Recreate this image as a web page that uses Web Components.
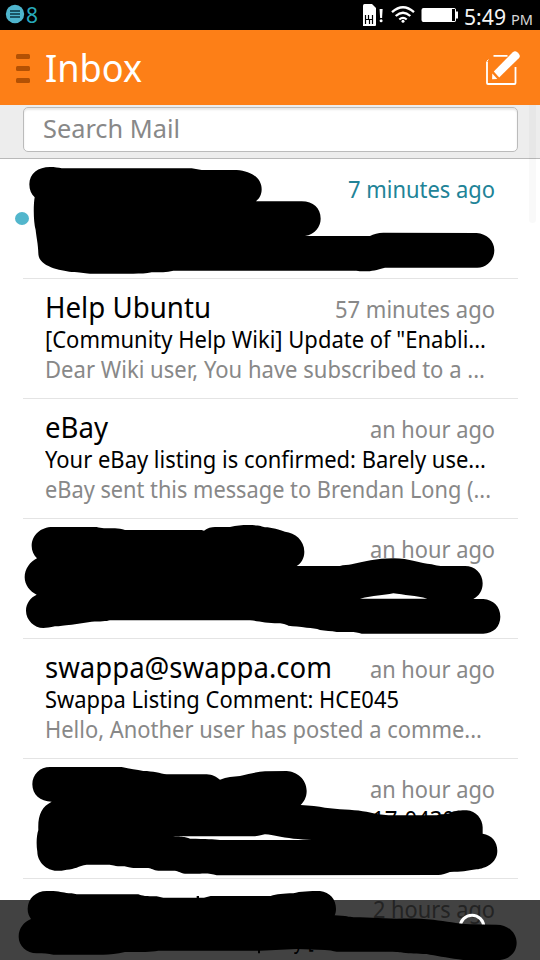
<!DOCTYPE html>
<html lang="en">
<head>
<meta charset="utf-8">
<title>Inbox</title>
<style>
body{margin:0;width:540px;height:960px;overflow:hidden;background:#fff;font-family:"Noto Sans","Open Sans",sans-serif}
</style>
</head>
<body>
<mail-app></mail-app>
<script>
const define = (name, html, setup) => customElements.define(name, class extends HTMLElement {
  constructor() {
    super();
    this.attachShadow({mode: 'open'}).innerHTML = html;
  }
  connectedCallback() { if (setup) setup(this, this.shadowRoot); }
});

// A single line of text condensed to the width given in its w attribute.
define('fit-text', `<style>:host{display:block;white-space:nowrap;flex:none}span{display:inline-block;transform-origin:0 50%}</style><span></span>`,
(el, root) => {
  const s = root.querySelector('span'), w = +el.getAttribute('w');
  s.textContent = el.getAttribute('text');
  el.style.width = w + 'px';
  s.style.transform = `scaleX(${w / s.getBoundingClientRect().width})`;
});

define('status-bar', `<style>
:host{display:flex;height:30px;background:#000;color:#fff;align-items:flex-start;box-sizing:border-box;padding:0 7px 0 5px}
svg{display:block;flex:none}
.n{font-size:22px;line-height:29px;color:#27a9bb;margin-left:1px}
.gap{flex:1}
.t{font-size:22px;line-height:33px;margin-left:6px;color:#f4f4f4}
.p{font-size:15px;line-height:39px;margin-left:5px;color:#d8d8d8}
</style>
<svg width="20" height="30"><circle cx="10" cy="14" r="9.2" fill="#4fb5cd"/><path d="M5 11h10M5 14h10M5 17h10" stroke="#0b3440" stroke-width="1.5"/></svg>
<fit-text class="n" w="12" text="8"></fit-text><div class="gap"></div>
<svg width="96" height="30" viewBox="362 0 96 30" fill="#fff">
<path d="M363 5.500a1.500 1.500 0 0 1 1.500-1.500H372l4 4V25a1 1 0 0 1-1 1H363z"/>
<path d="M365.500 15v9M365.500 19.500h3V15M372.500 15v9M369.500 24v-4.500h3" fill="none" stroke="#000" stroke-width="1.200"/>
<path d="M379.600 9h3l-.5 9h-2z"/><circle cx="381.100" cy="20.800" r="1.500"/>
<g fill="none" stroke="#fff" stroke-width="2.300"><path d="M392 12.200q11-10 22 0M395.700 16q7.300-6.600 14.600 0M399.300 19.500q3.700-3.200 7.400 0"/></g><circle cx="403" cy="21.300" r="1.500"/>
<path d="M423.500 8H454a2 2 0 0 1 2 1.500v2h2v7h-2v2a2 2 0 0 1-2 1.500H423.500a2 2 0 0 1-2-2V10a2 2 0 0 1 2-2z"/><path d="M452 9h3v12h-3z" fill="#000"/>
</svg>
<fit-text class="t" w="42" text="5:49"></fit-text><fit-text class="p" w="22" text="PM"></fit-text>`);

define('app-header', `<style>
:host{display:flex;height:75px;background:#fd7f17;color:#fff;align-items:center;box-sizing:border-box;padding:0 19px 0 16px}
.m{display:grid;gap:7px;width:14px;margin-top:2px}.m i{height:5px;border-radius:1.500px;background:#b35104}
.h{font-size:38px;line-height:75px;margin:-1px auto 0 15px}
svg{display:block}
</style>
<div class="m"><i></i><i></i><i></i></div><fit-text class="h" w="97" text="Inbox"></fit-text>
<svg width="36" height="36" viewBox="485 49 36 36"><path d="M493.500 54.800h14M487 60.500V82q0 1 1 1h26.500q1 0 1-1V66" fill="none" stroke="#fff" stroke-width="1.800"/><path d="M487 60l1.500-1.300" stroke="#fff"/><path d="M493.800 70.500L512.800 51.200a3.300 3.300 0 0 1 4.500 0l1.500 1.500a3.300 3.300 0 0 1 0 4.500L499.200 76.500z" fill="#fff"/><path d="M492.300 72.500l5 5.500-5.200.3z" fill="#fff"/></svg>`);

define('search-field', `<style>
:host{display:block;height:54px;background:#ededed;border-bottom:1px solid #b9b9b9;box-sizing:border-box;padding:2px 22px 0 23px}
div{height:45px;box-sizing:border-box;border:1px solid #bbb;border-radius:5px;background:#fff;box-shadow:inset 0 2px 2px #e8e8e8;padding-left:19px;font-size:25px;line-height:41px;color:#888}
</style><div><fit-text w="137" text="Search Mail"></fit-text></div>`);

define('mail-row', `<style>
:host{display:block;height:120px;box-sizing:border-box;margin:0 22px 0 23px;padding:11px 22px 0 22px;border-bottom:1px solid #e4e4e4;position:relative}
.top{display:flex;justify-content:space-between;align-items:baseline;height:34px;line-height:34px;font-size:29px}
.top::before{content:"\\200b";width:0}
.d{font-size:23px;color:#888;margin-left:auto;margin-right:1px}
:host([unread]) .d{color:#218397}
.s,.p{font-size:23px;line-height:30px;height:30px}.p{color:#888}
.dot{position:absolute;left:-8px;top:53px;width:14px;height:13px;border-radius:50%;background:#52b6cc}
</style><div class="top"></div><div class="s"></div><div class="p"></div>`,
(el, root) => {
  const put = (sel, cls, key) => {
    if (!el.hasAttribute(key)) return;
    const [w, text, indent] = el.getAttribute(key).split('|');
    const f = document.createElement('fit-text');
    f.className = cls;
    f.setAttribute('w', w);
    f.setAttribute('text', text);
    if (indent) f.style.marginLeft = indent + 'px';
    root.querySelector(sel).append(f);
  };
  put('.top', 'n', 'name'); put('.top', 'd', 'date'); put('.s', '', 'subject'); put('.p', '', 'preview');
  if (el.hasAttribute('unread')) {
    const dot = document.createElement('div');
    dot.className = 'dot';
    root.append(dot);
  }
});

define('bottom-bar', `<style>:host{display:block;background:rgba(0,0,0,.74)}svg{display:block}</style>
<svg width="540" height="60" viewBox="0 900 540 60"><circle cx="472" cy="927" r="11.800" fill="none" stroke="#fff" stroke-width="3"/></svg>`);

// Hand-drawn marker strokes; each group is drawn on a grid of one third of a pixel.
define('marker-strokes', `<style>:host{display:block;pointer-events:none}svg{display:block}</style>
<svg width="540" height="960" fill="#000" fill-rule="evenodd">
<path transform="translate(0 155) scale(.33333)" d="M88 88C88 55 115 36 150 36C165 36 175 38 185 40L575 40L605 45L710 45C755 48 785 70 785 103C785 120 778 130 768 139L905 139C940 139 962 160 962 191C962 215 945 238 915 243L1110 243C1120 237 1135 233 1150 233L1430 234C1460 236 1483 257 1483 286C1483 315 1460 338 1432 338L1155 338C1130 345 1115 349 1095 349C1080 349 1070 347 1050 347L520 347C500 352 480 352 455 352C440 356 420 356 400 356L270 356C250 355 240 351 215 351C180 346 115 335 115 295C115 270 108 240 107 225C100 200 100 150 104 127C94 118 88 105 88 88Z"/>
<path transform="translate(0 515) scale(.33333)" d="M95 93C95 60 122 36 158 36L290 36C305 40 315 40 345 40C355 40 365 43 375 45L605 45L612 47C622 38 635 37 645 36L690 36C710 31 725 30 745 30C775 30 785 33 795 37C815 37 840 45 855 50C885 54 913 75 913 110C913 130 903 145 890 153L1020 153C1030 150 1045 151 1055 148C1090 140 1130 130 1180 130C1230 130 1260 145 1295 148C1308 151 1315 153 1322 153L1395 153C1425 153 1448 175 1448 205C1448 228 1437 243 1420 252L1450 252C1480 254 1501 275 1501 305C1501 335 1480 355 1450 356L1085 356C1075 353 1065 351 1050 351L1010 351C995 347 975 348 960 345C950 340 935 339 920 338C900 334 880 334 865 332C855 328 850 325 835 325C800 325 775 318 750 316L330 316C320 319 300 320 275 320L215 329C190 331 180 334 165 334C150 337 140 339 130 339C103 339 78 315 78 287C78 265 92 247 110 239C90 230 74 210 74 187C74 163 90 140 111 130C101 120 95 108 95 93ZM1080 251C1120 242 1150 241 1180 235C1210 240 1250 242 1282 251Z"/>
<g transform="translate(0 755) scale(.33333)">
<path d="M97 88C97 58 120 36 150 36L365 36C390 42 410 44 430 48C460 48 480 55 500 58L620 58C637 58 650 67 660 74C680 66 700 65 720 63C750 55 775 50 795 49L860 48C890 50 920 72 920 108C920 127 912 140 902 150C930 153 955 153 975 158L1020 163C1060 165 1095 168 1120 175C1140 180 1160 181 1180 181L1310 181C1320 177 1340 178 1350 174C1365 166 1385 166 1400 166C1428 168 1448 192 1448 217L1448 236C1475 240 1492 260 1492 287C1492 325 1455 340 1430 343C1400 348 1385 351 1350 351C1340 355 1325 360 1315 360L650 361C635 357 625 355 600 356L555 356C540 354 535 348 525 347L475 347C460 346 455 340 445 339L400 339C385 338 380 334 370 334C345 334 335 329 325 329L260 329C235 333 225 343 200 344C190 347 180 347 170 347C140 347 112 320 112 290C108 265 110 240 115 225C113 180 125 155 155 140C120 140 97 118 97 88ZM495 244C545 244 555 246 570 251C620 252 640 252 660 255L935 255C900 254 860 249 830 243C820 241 810 239 795 238C785 239 780 243 765 244Z"/>
<path d="M83 462C83 430 108 408 140 408L160 408C185 410 190 414 215 415L230 418L415 418C425 423 440 424 470 424L490 428L590 428V423H597V428L612 428L632 423L812 423C830 418 850 415 880 415C900 409 930 408 960 408C990 412 1008 432 1008 462C1008 470 1006 477 1004 481L1035 483C1050 486 1060 487 1080 487L1190 491C1230 490 1260 490 1300 494C1340 499 1370 505 1410 508L1490 509C1525 509 1550 535 1550 563C1550 590 1530 612 1500 615L1390 615C1350 609 1320 604 1290 599L1280 597C1250 596 1230 595 1210 593C1190 590 1180 590 1010 590C1000 588 985 585 975 585L890 582L780 587V595H774V587L475 587C450 591 430 591 375 591C350 597 330 599 310 599L160 599C145 596 130 595 110 595C80 595 56 573 56 545C56 520 72 500 93 492C87 483 83 475 83 462Z"/>
</g></svg>`);

define('mail-app', `<style>
:host{display:block;width:540px;height:960px;position:relative;overflow:hidden;background:#fff;color:#000}
bottom-bar{position:absolute;left:0;right:0;bottom:0;height:60px}
marker-strokes{position:absolute;left:0;top:0}
.scroll{position:absolute;left:529px;top:105px;width:7px;height:118px;border-radius:0 0 3px 3px;background:rgba(0,0,0,.025)}
</style>
<status-bar></status-bar><app-header></app-header><search-field></search-field>
<mail-row unread date="147|7 minutes ago"></mail-row>
<mail-row name="166|Help Ubuntu" date="160|57 minutes ago" subject='441|[Community Help Wiki] Update of "Enabli...' preview="440|Dear Wiki user, You have subscribed to a ..."></mail-row>
<mail-row name="63|eBay" date="125|an hour ago" subject="441|Your eBay listing is confirmed: Barely use..." preview="446|eBay sent this message to Brendan Long (..."></mail-row>
<mail-row date="125|an hour ago"></mail-row>
<mail-row name="287|swappa@swappa.com" date="125|an hour ago" subject="354|Swappa Listing Comment: HCE045" preview="437|Hello, Another user has posted a comme..."></mail-row>
<mail-row date="125|an hour ago" subject="83|17-0430|327"></mail-row>
<mail-row date="122|2 hours ago" subject="29|y [L|249"></mail-row>
<bottom-bar></bottom-bar><marker-strokes></marker-strokes><div class="scroll"></div>`);
</script>
</body>
</html>
